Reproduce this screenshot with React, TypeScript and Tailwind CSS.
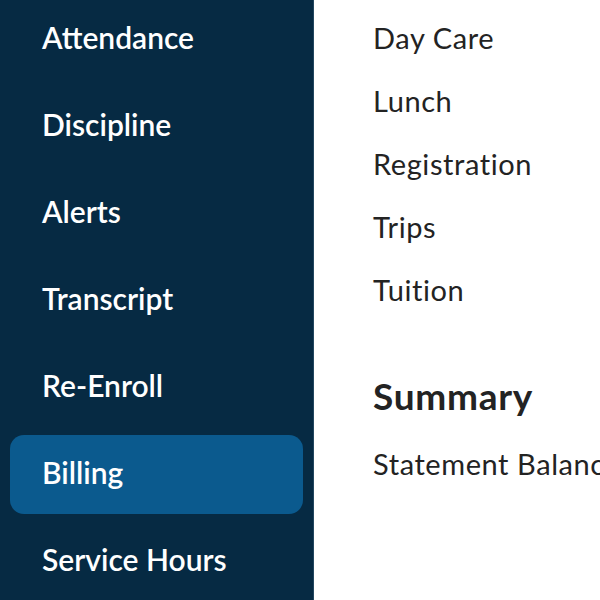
const navItems = [
  "Attendance",
  "Discipline",
  "Alerts",
  "Transcript",
  "Re-Enroll",
  "Billing",
  "Service Hours",
];

const categories = ["Day Care", "Lunch", "Registration", "Trips", "Tuition"];

export default function App() {
  return (
    <div
      className="flex h-[600px] w-[600px] overflow-hidden bg-white"
      style={{ fontFamily: "Lato, 'Open Sans', sans-serif" }}
    >
      {/* Sidebar */}
      <aside className="flex w-[314px] shrink-0 flex-col gap-[8px] border-r border-[#23475f] bg-[#062a43] px-[10px]">
        {navItems.map((item) => (
          <div
            key={item}
            className={`flex h-[79px] shrink-0 items-center rounded-[14px] pl-[32px] text-[30px] font-semibold text-white ${
              item === "Billing" ? "bg-[#0b5a8e]" : ""
            }`}
          >
            <span className="-mt-[4px]">{item}</span>
          </div>
        ))}
      </aside>

      {/* Content */}
      <main className="flex flex-col whitespace-nowrap pl-[59px] pt-[6px] text-[#232323]">
        {categories.map((c) => (
          <div key={c} className="flex h-[63px] items-center text-[29px] tracking-[0.02em]">
            {c}
          </div>
        ))}
        <h2 className="mt-[53px] text-[37px] font-bold leading-[44px] tracking-[0.02em]">Summary</h2>
        <div className="mt-[28px] text-[29px] leading-[36px] tracking-[0.02em]">Statement Balance</div>
      </main>
    </div>
  );
}
